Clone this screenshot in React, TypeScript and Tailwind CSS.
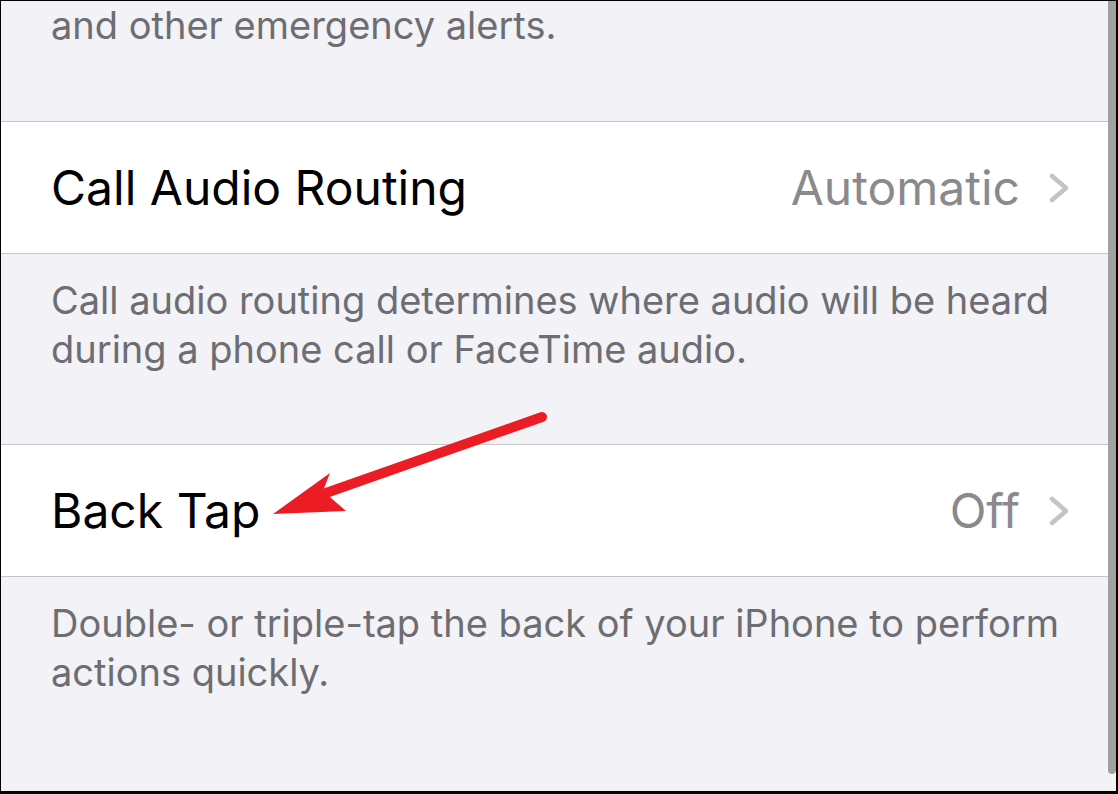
const Row = ({ label, value }: { label: string; value: string }) => (
    <div className="flex h-[131px] items-center bg-white pl-[50px] pr-[44px]">
        <span className="flex-1 text-[48px] text-black">{label}</span>
        <span className="text-[48px] text-[#8a8a8e]">{value}</span>
        <svg className="ml-[26px]" width="26" height="32" viewBox="0 0 26 32" fill="none">
            <path d="M6 4 L20 16 L6 28" stroke="#c4c4c7" strokeWidth="4.5" strokeLinecap="round" strokeLinejoin="round" />
        </svg>
    </div>
);

const Footer = ({ lines }: { lines: string }) => (
    <div className="px-[50px] pt-[22px] text-[38px] leading-[49px] text-[#6d6d72]">{lines}</div>
);

export default function App() {
    return (
        <div className="relative h-[794px] w-[1118px] overflow-hidden border-t border-b-[3px] border-l border-r-2 border-black bg-[#f2f2f7] font-['Inter',sans-serif]">
            <div className="flex h-full flex-col">
                <div className="h-[121px] border-b border-[#c6c6c8] px-[50px] text-[38px] leading-[49px] text-[#6d6d72]">
                    and other emergency alerts.
                </div>
                <Row label="Call Audio Routing" value="Automatic" />
                <div className="h-[192px] border-y border-[#c6c6c8]">
                    <Footer lines="Call audio routing determines where audio will be heard during a phone call or FaceTime audio." />
                </div>
                <Row label="Back Tap" value="Off" />
                <div className="flex-1 border-t border-[#c6c6c8]">
                    <Footer lines="Double- or triple-tap the back of your iPhone to perform actions quickly." />
                </div>
            </div>

            {/* scroll indicator */}
            <div className="absolute top-0 right-0 h-[773px] w-[8px] rounded-b-[4px] bg-[#a1a1a1]" />

            {/* red annotation arrow */}
            <svg className="absolute top-0 left-0" width="1118" height="794" viewBox="0 0 1118 794">
                <line x1="541" y1="416" x2="325" y2="492" stroke="#ec1c24" strokeWidth="10" strokeLinecap="round" />
                <polygon points="272,513 329,472 322,490 345,510" fill="#ec1c24" />
            </svg>
        </div>
    );
}
